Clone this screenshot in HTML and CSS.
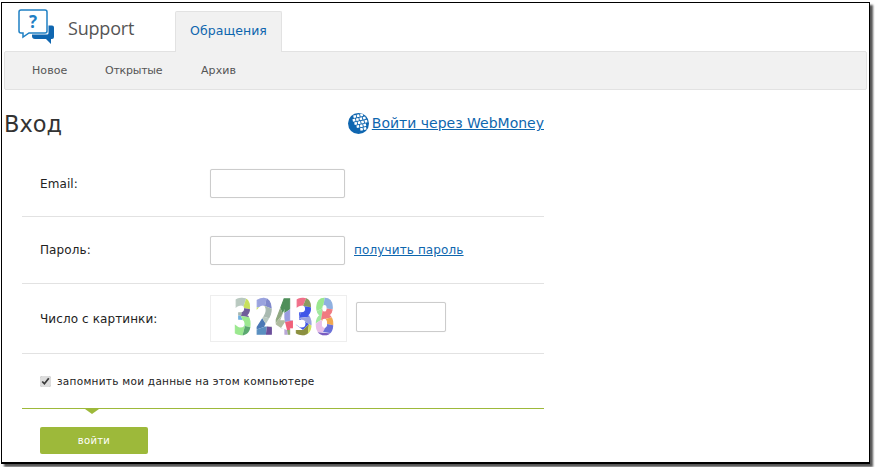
FILE: index.html
```html
<!DOCTYPE html>
<html lang="ru">
<head>
<meta charset="utf-8">
<title>Support</title>
<link rel="stylesheet" href="styles.css">
</head>
<body>
<div class="window">
  <header class="top">
    <a class="logo">
      <svg class="logo-icon" width="38" height="36" viewBox="0 0 38 36">
        <path d="M3 1H27Q29 1 29 3V22Q29 24 27 24H11L5 28V24H3Q1 24 1 22V3Q1 1 3 1Z" fill="#fff" stroke="#1f80c4" stroke-width="1.5"/>
        <path d="M30.5 16.5H34Q36 16.5 36 18.5V28Q36 30 34 30H33V35L28 30H17Q14 30 14 27V25.5H29Q30.5 25.5 30.5 24Z" fill="#0f66b0"/>
        <text x="15" y="19" text-anchor="middle" class="logo-q">?</text>
      </svg>
      <span class="logo-text">Support</span>
    </a>
    <a class="tab">Обращения</a>
  </header>
  <nav class="subnav">
    <a>Новое</a>
    <a class="tight">Открытые</a>
    <a>Архив</a>
  </nav>
  <main class="content">
    <div class="head">
      <h1>Вход</h1>
      <a class="wm">
        <svg class="wm-icon" width="21" height="21" viewBox="0 0 21 21">
          <defs><clipPath id="wmc"><circle cx="10.5" cy="10.5" r="10.5"/></clipPath></defs>
          <circle cx="10.5" cy="10.5" r="10.5" fill="#0f66b0"/>
          <g clip-path="url(#wmc)">
            <g fill="#fff" transform="rotate(-12 10.5 10.5)">
              <rect x="7" y="1.5" width="2.6" height="2.6"/><rect x="10.5" y="1.5" width="2.6" height="2.6"/><rect x="14" y="1.5" width="2.6" height="2.6"/>
              <rect x="5.5" y="5" width="2.6" height="2.6"/><rect x="9" y="5" width="2.6" height="2.6"/><rect x="12.5" y="5" width="2.6" height="2.6"/><rect x="16" y="5" width="2.6" height="2.6"/>
              <rect x="6.5" y="8.5" width="2.6" height="2.6"/><rect x="10" y="8.5" width="2.6" height="2.6"/><rect x="13.5" y="8.5" width="2.6" height="2.6"/><rect x="17" y="8.5" width="2.6" height="2.6"/>
              <rect x="8" y="12" width="2.6" height="2.6"/><rect x="11.5" y="12" width="2.6" height="2.6"/><rect x="15" y="12" width="2.6" height="2.6"/>
              <rect x="11" y="15.5" width="2.6" height="2.6"/><rect x="14.5" y="15.5" width="2.6" height="2.6"/>
            </g>
          </g>
        </svg>
        <span>Войти через WebMoney</span>
      </a>
    </div>
    <form class="form">
      <div class="row row-std">
        <label class="lbl lbl-email">Email:</label>
        <input class="field" type="text">
      </div>
      <div class="row row-std">
        <label class="lbl">Пароль:</label>
        <input class="field" type="password">
        <a class="get">получить пароль</a>
      </div>
      <div class="row row-cap">
        <label class="lbl">Число с картинки:</label>
        <div class="captcha">
          <svg width="135" height="45" viewBox="0 0 135 45">
            <defs>
              <mask id="digits" maskUnits="userSpaceOnUse" x="0" y="0" width="135" height="45">
                <g class="cap-digits">
                  <text transform="translate(22.5 38) scale(.56 1)">3</text>
                  <text transform="translate(44 38) scale(.56 1)">2</text>
                  <text transform="translate(64 38) scale(.56 1)">4</text>
                  <text transform="translate(83.5 38) scale(.56 1)">3</text>
                  <text transform="translate(103.5 38) scale(.6 1)">8</text>
                </g>
              </mask>
            </defs>
            <g mask="url(#digits)" class="cap-patches">
              <polygon points="20,0 36,0 32,12 20,10" fill="#b9c9c0"/>
              <polygon points="36,0 44,0 44,14 32,12" fill="#c7e05a"/>
              <polygon points="20,10 32,12 30,20 20,18" fill="#a8b8b0"/>
              <polygon points="32,12 44,14 44,22 30,20" fill="#6f5c9a"/>
              <polygon points="20,18 30,20 34,30 20,26" fill="#6fb0e0"/>
              <polygon points="30,20 44,22 44,32 34,30" fill="#9be88f"/>
              <polygon points="20,26 34,30 30,45 20,45" fill="#9be88f"/>
              <polygon points="34,30 44,32 44,45 30,45" fill="#5aa86f"/>

              <polygon points="44,0 56,0 54,10 44,12" fill="#9aa3de"/>
              <polygon points="56,0 64,0 64,14 54,10" fill="#7f88cc"/>
              <polygon points="54,10 64,14 64,24 50,20" fill="#a8b9b0"/>
              <polygon points="44,12 54,10 50,20 44,24" fill="#c7e05a"/>
              <polygon points="44,24 50,20 56,30 44,34" fill="#4a78b5"/>
              <polygon points="50,20 64,24 64,32 56,30" fill="#b8c8c0"/>
              <polygon points="44,34 56,30 54,45 44,45" fill="#5a8fc0"/>
              <polygon points="56,30 64,32 64,45 54,45" fill="#6b4f9a"/>

              <polygon points="64,0 84,0 84,10 72,18" fill="#4f8f5a"/>
              <polygon points="64,0 72,18 64,28" fill="#8fa880"/>
              <polygon points="72,18 84,10 84,24 74,26" fill="#9a9ce0"/>
              <polygon points="64,28 72,18 74,26 70,32" fill="#b0bca0"/>
              <polygon points="74,26 84,24 84,34 76,34" fill="#f0607a"/>
              <polygon points="70,32 76,34 78,45 64,45" fill="#b9a8d8"/>
              <polygon points="76,34 84,34 84,45 78,45" fill="#8fa870"/>

              <polygon points="84,0 96,0 92,10 84,14" fill="#f0708a"/>
              <polygon points="96,0 104,0 104,12 92,10" fill="#8a9a60"/>
              <polygon points="92,10 104,12 104,20 88,22" fill="#3f55e8"/>
              <polygon points="84,14 92,10 88,22 84,28" fill="#3f55e8"/>
              <polygon points="84,28 88,22 98,28 92,34" fill="#3f55e8"/>
              <polygon points="88,22 104,20 104,32 98,28" fill="#9aa3de"/>
              <polygon points="84,34 92,34 98,28 96,45 84,45" fill="#8c9040"/>
              <polygon points="98,28 104,32 104,45 96,45" fill="#cfe05a"/>

              <polygon points="104,0 114,0 112,12 104,16" fill="#9be88f"/>
              <polygon points="114,0 126,0 126,14 112,12" fill="#8fb0e0"/>
              <polygon points="104,16 112,12 110,24 104,28" fill="#a0e8a0"/>
              <polygon points="112,12 126,14 126,20 110,24" fill="#f07a80"/>
              <polygon points="110,24 126,20 126,30 116,28" fill="#f0a850"/>
              <polygon points="104,28 110,24 116,28 112,36 104,36" fill="#e8c0e8"/>
              <polygon points="116,28 126,30 126,38 112,36" fill="#6a70d8"/>
              <polygon points="104,36 126,38 126,45 104,45" fill="#7a5cc0"/>
            </g>
          </svg>
        </div>
        <input class="field field-cap" type="text">
      </div>
      <div class="row row-check">
        <label class="check"><input type="checkbox" checked><span>запомнить мои данные на этом компьютере</span></label>
      </div>
      <div class="actions">
        <button type="button" class="btn">войти</button>
      </div>
    </form>
  </main>
</div>
</body>
</html>
```
FILE: styles.css
```css
* { box-sizing: border-box; }
html, body { margin: 0; padding: 0; width: 875px; height: 467px; overflow: hidden; background: #fff; }
body { font-family: "DejaVu Sans", sans-serif; color: #333; }
.window {
  width: 869px;
  height: 462px;
  margin: 2px 0 0 1px;
  border: 1px solid #000;
  border-bottom-width: 2px;
  background: #fff;
  box-shadow: 3px 3px 2px #555;
  padding: 0 2px;
  overflow: hidden;
}
a { text-decoration: none; }
.top { display: flex; height: 47px; align-items: flex-start; }
.logo { display: flex; width: 171px; padding: 6px 0 0 14px; }
.logo-icon { display: block; flex: none; }
.logo-q { font: bold 17px "Open Sans", sans-serif; fill: #1f80c4; }
.logo-text { font: 18px/24px "Open Sans", sans-serif; color: #555; margin: 7px 0 0 12px; letter-spacing: -.2px; }
.tab {
  width: 107px; height: 41px; margin-top: 8px;
  background: #f1f1f1; border: 1px solid #e2e2e2; border-bottom: 0;
  border-radius: 2px 2px 0 0;
  font-size: 12.5px; letter-spacing: .05px; color: #0e66ae; text-align: center; line-height: 38px;
  position: relative; z-index: 1;
}
.subnav {
  display: flex; height: 39px; margin-top: 1px;
  background: #f1f1f1; border: 1px solid #e2e2e2; border-radius: 2px;
  padding-left: 27px; font-size: 11px; line-height: 37px; color: #555; letter-spacing: .1px;
}
.subnav a:nth-child(1) { width: 73px; }
.subnav a:nth-child(2) { width: 96px; }
.subnav .tight { letter-spacing: -.25px; }
.content { width: 540px; }
.head { display: flex; justify-content: space-between; align-items: center; height: 49px; padding-top: 19px; }
h1 { margin: 0; font-weight: 400; font-size: 22.5px; line-height: 30px; color: #333; }
.wm { display: flex; align-items: center; color: #0e66ae; font-size: 14px; margin-top: -2px; }
.wm span { text-decoration: underline; margin-left: 3px; }
.wm-icon { display: block; }
.form { margin-left: 18px; margin-top: 11px; }
.row { display: flex; align-items: center; border-bottom: 1px solid #e2e2e2; padding-left: 18px; font-size: 12px; color: #222; }
.row-std { height: 67px; }
.row-cap { height: 70px; }
.row-check { height: 55px; border-bottom: 1px solid #9db93a; }
.lbl { width: 170px; letter-spacing: .1px; }
.lbl-email { padding-top: 2px; }
.field { width: 135px; height: 29px; border: 1px solid #ccc; border-radius: 2px; background: #fff; box-shadow: 0 0 1px #ddd; }
.get { color: #0e66ae; text-decoration: underline; margin-left: 9px; letter-spacing: .13px; }
.captcha { width: 137px; height: 47px; border: 1px solid #eee; }
.captcha svg { display: block; }
.cap-digits text { font: bold 48px "DejaVu Sans", sans-serif; fill: #fff; stroke: #fff; stroke-width: 1.6px; }
.cap-patches { filter: blur(.4px); }
.field-cap { width: 90px; height: 30px; margin: 0 0 3px 9px; }
.check { display: flex; align-items: center; font-size: 10.5px; letter-spacing: .27px; color: #222; }
.check input { margin: 0 6px 0 0; width: 11px; height: 11px; accent-color: #ddd; }
.actions { position: relative; padding: 18px 0 0 18px; }
.actions::before {
  content: ""; position: absolute; left: 63px; top: 0;
  border-style: solid; border-width: 5px 7px 0 7px; border-color: #9db93a transparent transparent;
}
.btn {
  display: block; width: 108px; height: 27px; border: 0; border-radius: 2px;
  background: #9db93a; color: #fff; font: 10px "DejaVu Sans", sans-serif; letter-spacing: .3px;
}
```
